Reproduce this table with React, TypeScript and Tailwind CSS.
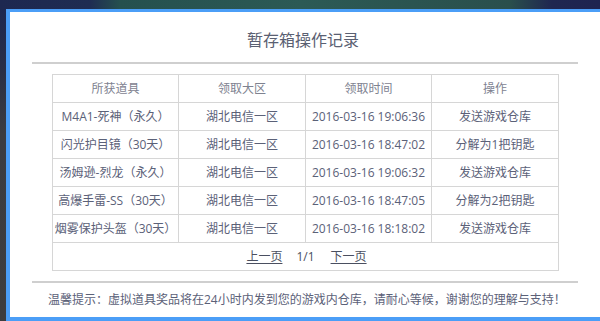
import React from "react";

const rows = [
  ["M4A1-死神（永久）", "湖北电信一区", "2016-03-16 19:06:36", "发送游戏仓库"],
  ["闪光护目镜（30天）", "湖北电信一区", "2016-03-16 18:47:02", "分解为1把钥匙"],
  ["汤姆逊-烈龙（永久）", "湖北电信一区", "2016-03-16 19:06:32", "发送游戏仓库"],
  ["高爆手雷-SS（30天）", "湖北电信一区", "2016-03-16 18:47:05", "分解为2把钥匙"],
  ["烟雾保护头盔（30天）", "湖北电信一区", "2016-03-16 18:18:02", "发送游戏仓库"],
];

const headers = ["所获道具", "领取大区", "领取时间", "操作"];

export default function App() {
  return (
    <div
      className="w-[600px] h-[321px] overflow-hidden flex flex-col bg-[#3a3b3f]"
      style={{ fontFamily: '"Open Sans", "Noto Sans CJK SC", sans-serif' }}
    >
      <div className="h-[9px] shrink-0 bg-[linear-gradient(90deg,#1d2850_0%,#1f2c52_15%,#25504e_20%,#2c5a55_50%,#2a4f4c_85%,#1f2650_92%,#1e2450_100%)]" />
      <div className="flex flex-1 min-h-0">
        <div className="w-[6px] shrink-0 bg-[linear-gradient(180deg,#1d2850_0%,#2a2f45_20%,#3b3c40_40%,#3d3d3f_100%)]" />
        <div className="flex-1 bg-white border-l-4 border-t-[3px] border-b-4 border-[#4b9ef7] flex flex-col">
          <div className="pt-[16px] h-[24px] box-content text-center text-[16px] leading-[24px] text-[#5a6072] pr-[4px]">
            暂存箱操作记录
          </div>
          <div className="mx-[22px] mt-[10px] h-[2px] bg-[#cfcfcf]" />
          <div className="mt-[10px] ml-[42px]">
            <table className="w-[506px] table-fixed border-collapse text-[12px] text-center">
              <colgroup>
                <col className="w-[126px]" />
                <col className="w-[127px]" />
                <col className="w-[126px]" />
                <col className="w-[127px]" />
              </colgroup>
              <thead>
                <tr className="h-[28px]">
                  {headers.map((h) => (
                    <th key={h} className="border border-[#d6d6d6] font-normal text-[#7e8290] p-0">
                      {h}
                    </th>
                  ))}
                </tr>
              </thead>
              <tbody>
                {rows.map((r, i) => (
                  <tr key={i} className="h-[28px]">
                    {r.map((c, j) => (
                      <td key={j} className="border border-[#d6d6d6] text-[#5b6178] p-0 whitespace-nowrap">
                        {c}
                      </td>
                    ))}
                  </tr>
                ))}
                <tr className="h-[28px]">
                  <td colSpan={4} className="border border-[#d6d6d6] p-0 text-[#4a4f60]">
                    <div className="flex justify-center items-center pl-[2px]">
                      <span className="underline underline-offset-2">上一页</span>
                      <span className="ml-[14px]">1/1</span>
                      <span className="ml-[16px] underline underline-offset-2">下一页</span>
                    </div>
                  </td>
                </tr>
              </tbody>
            </table>
          </div>
          <div className="mx-[22px] mt-[10px] h-[2px] bg-[#cfcfcf]" />
          <div className="mt-[8px] pl-[38px] text-[12px] leading-[18px] text-[#5b6178] whitespace-nowrap">
            温馨提示：虚拟道具奖品将在24小时内发到您的游戏内仓库，请耐心等候，谢谢您的理解与支持！
          </div>
        </div>
      </div>
    </div>
  );
}
